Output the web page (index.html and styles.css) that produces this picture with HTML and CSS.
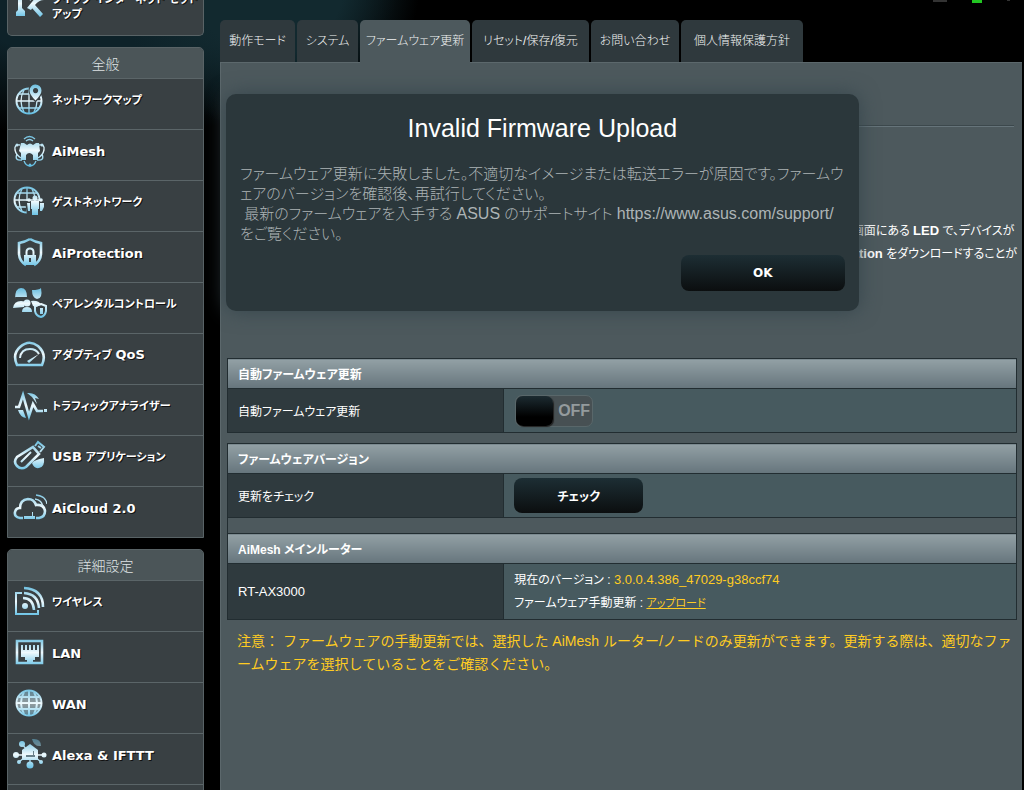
FILE: index.html
```html
<!DOCTYPE html>
<html lang="ja">
<head>
<meta charset="utf-8">
<title>ファームウェア更新</title>
<link rel="stylesheet" href="styles.css">
</head>
<body>
<svg class="defs" aria-hidden="true">
  <defs>
    <linearGradient id="ice" gradientUnits="userSpaceOnUse" x1="0" y1="3" x2="0" y2="32">
      <stop offset="0" stop-color="#6fc0e0"/><stop offset=".5" stop-color="#eef9fd"/><stop offset="1" stop-color="#62bfe4"/>
    </linearGradient>
  </defs>
</svg>
<div class="page">
  <nav class="sidebar">
    <div class="menu menu-top">
      <a class="item item-setup" href="#">
        <svg class="icon" viewBox="0 0 34 34"><path class="f" d="M2 8h9v4l-2 2v8l3 3v5H3v-4l2-2V14l-3-2zM14 22l9-11 3 2-8 11zM20 17q6-5 11-3-5 0-9 5l8 9-3 3-9-10z"/><path class="s" d="M15 11l3 3M21 8l1 3"/></svg>
        <span>クイック インターネット セット<br>アップ</span>
      </a>
    </div>
    <div class="menu">
      <h2 class="menu-title">全般</h2>
      <a class="item" href="#"><svg class="icon" viewBox="0 0 34 34"><circle class="s" cx="16" cy="19" r="12.5"/><path class="s t" d="M16 6.500v25M4 19h25M6 12h20M6 26h20M11 8q-6 11 0 22M21 8q6 11 0 22"/><path class="k" d="M21.500 1.500a7.500 7.500 0 0 1 8 7q0 5-7 12-7-7-7-12a7 7 0 0 1 6-7"/><path class="f" fill-rule="evenodd" d="M22 2.500a6 6 0 0 1 6.500 6q0 4-6 10-6-6-6-10a6 6 0 0 1 5.500-6m.500 3.500a2.600 2.600 0 1 0 .1 0"/></svg><span>ネットワークマップ</span></a>
      <a class="item" href="#"><svg class="icon" viewBox="0 0 34 34"><path class="f" d="M8 10h3l3 2q3-3 6 0l3-2h3l1 8-2 2v7h-5v-5q-4-4-7 0v5H8v-7l-2-2z"/><path class="s t" d="M11 6q5.500-5 11 0M13 8q3.500-3 7 0M7 12q-6-1-5 5 1 5 6 8M26 12q6-1 5 5-1 5-6 8M4 21q-3 7 5 6M29 21q3 7-5 6M11 28q2 5 6 5t6-5"/><circle class="f" cx="4" cy="12" r="1.500"/><circle class="f" cx="29" cy="12" r="1.500"/><circle class="f" cx="17" cy="32" r="1.500"/></svg><span class="latin-item">AiMesh</span></a>
      <a class="item" href="#"><svg class="icon" viewBox="0 0 34 34"><circle class="s" cx="14" cy="16" r="12.500"/><path class="s t" d="M14 4v25M2 16h25M4 9h20M4 23h20M9 5q-6 11 0 22M19 5q6 11 0 22"/><path class="k" d="M12 17h20v14H14z"/><circle class="f" cx="22" cy="14" r="2.500"/><path class="f" d="M18 17h8v8h-1v6h-6v-6h-1z"/><circle class="f" cx="16" cy="16" r="1.800"/><circle class="f" cx="28" cy="16" r="1.800"/><path class="f" d="M14 19h3v8h-2zM27 19h4v4l-2 4h-2z"/></svg><span>ゲストネットワーク</span></a>
      <a class="item" href="#"><svg class="icon" viewBox="0 0 34 34"><path class="s w" d="M17 4q5 3 11 4v10q0 8-7 12M17 4q-5 3-11 4v10q0 8 7 12"/><path class="s" d="M13.500 21v-4q0-3.500 3.500-3.500t3.500 3.500v4"/><path class="f" fill-rule="evenodd" d="M11 20h12v10H11zm5 3v4h2v-4z"/></svg><span class="latin-item">AiProtection</span></a>
      <a class="item" href="#"><svg class="icon" viewBox="0 0 34 34"><path class="f" d="M2 13q0-11 6-11t6 9H2zM19 4q7 0 9-2 2 11-4 11-5-1-5-9zM0 22q1-7 8-7 4 0 5 2-2 2-2 4zM18 15q8-1 10 4l-5 2-3-1z"/><circle class="f" cx="14" cy="17" r="3.500"/><path class="f" d="M9 26q0-5 5-5t5 5z"/><path class="s" d="M28 18l5 2v5q-1 5-5 6-5-1-6-6v-5z"/><path class="f" d="M27 22h3v6h-3z"/></svg><span>ペアレンタルコントロール</span></a>
      <a class="item" href="#"><svg class="icon" viewBox="0 0 34 34"><path class="s w" d="M4 28Q-1 17 7 10q9-8 18-1 9 8 4 19z"/><path class="s" d="M7 21q1-9 10-9 6 0 9 5"/><path class="f" d="M14 24l12-7-10 9z"/></svg><span>アダプティブ <span class="latin-item">QoS</span></span></a>
      <a class="item" href="#"><svg class="icon" viewBox="0 0 34 34"><path class="s w" d="M2 19h4l4-12 6 21 4-12 4 7h6"/><path class="f" d="M14 5q8-1 12 6l-4-1 2 6-5-7zM5 22h5l3 8q-6-1-8-8zM31 21h3v3h-3z"/></svg><span>トラフィックアナライザー</span></a>
      <a class="item" href="#"><svg class="icon" viewBox="0 0 34 34"><path class="s w" d="M20 8l6 7-13 13q-5 3-9-1t0-9z"/><path class="s" d="M22 7l3-4 6 5-4 5M18 13L8 23M25 7l3 2"/><path class="f" d="M19 24q2-3 12-5 1 9-5 10-5 1-7-5z"/></svg><span><span class="latin-item">USB</span> アプリケーション</span></a>
      <a class="item" href="#"><svg class="icon" viewBox="0 0 34 34"><path class="s w" d="M10 28H7q-6-1-5-6 1-4 5-4 0-8 8-9 6 0 8 6 8-1 9 6 0 6-6 7h-3"/><path class="s t" d="M22 9q7 1 8 8M23 5q10 1 11 9"/><path class="f" d="M11 26h11v3H11zM19 22h1v4h-1z"/></svg><span class="latin-item">AiCloud 2.0</span></a>
    </div>
    <div class="menu">
      <h2 class="menu-title">詳細設定</h2>
      <a class="item" href="#"><svg class="icon" viewBox="0 0 34 34"><path class="s" d="M9 9H3v21h22v-4"/><path class="s w" d="M10 14q10 0 11 12M11 9q14 1 15 15M11 4q19 1 19 19"/><circle class="f" cx="12" cy="22" r="3"/></svg><span>ワイヤレス</span></a>
      <a class="item" href="#"><svg class="icon" viewBox="0 0 34 34"><path class="s w" d="M4 6h25v22H4z"/><path class="f" d="M8 10h2v5h2v-5h2v5h2v-5h2v5h2v-5h2v5h2v-5h2v12h-4v3h-2v2h-6v-2h-2v-3H8z"/></svg><span class="latin-item">LAN</span></a>
      <a class="item" href="#"><svg class="icon" viewBox="0 0 34 34"><circle class="f d" cx="16" cy="17" r="12"/><circle class="s" cx="16" cy="17" r="12.500"/><path class="s" d="M16 5v25M4 17h25M6 11h20M6 23h20M11 6q-6 11 0 22M21 6q6 11 0 22"/></svg><span class="latin-item">WAN</span></a>
      <a class="item" href="#"><svg class="icon" viewBox="0 0 34 34"><path class="s t" d="M9 7l5 6M2 18h30M6 25l6-5M17 20v8M28 25l-6-5"/><path class="f" d="M9 13l8-6 8 6v10H9z"/><path class="f d" d="M19 2q9-1 9 7-7 1-9-7z"/><circle class="f" cx="9" cy="7" r="3"/><circle class="f" cx="3" cy="18" r="3"/><circle class="f" cx="31" cy="18" r="2.500"/><circle class="f" cx="17" cy="28" r="3.500"/><circle class="f" cx="6" cy="25" r="2"/><circle class="f" cx="28" cy="25" r="2"/><path class="g" d="M13 18h9v2h-9zM20 14h1v4h-1z"/></svg><span class="latin-item">Alexa &amp; IFTTT</span></a>
      <a class="item" href="#" aria-label="メニュー"></a>
    </div>
  </nav>

  <main class="main">
    <div class="status"><i class="led"></i><i class="led led-on"></i><i class="led led-dot"></i></div>
    <nav class="tabs">
      <a class="tab" href="#">動作モード</a>
      <a class="tab" href="#">システム</a>
      <a class="tab tab-active" href="#">ファームウェア更新</a>
      <a class="tab" href="#">リセット/保存/復元</a>
      <a class="tab" href="#">お問い合わせ</a>
      <a class="tab" href="#">個人情報保護方針</a>
    </nav>
    <section class="panel">
      <div class="intro">
        <hr class="rule">
        <p class="intro-text">画面にある <b>LED</b> で、デバイスが<br><b>ation</b> をダウンロードすることが</p>
      </div>

      <table class="grid">
        <thead><tr><th colspan="2">自動ファームウェア更新</th></tr></thead>
        <tbody><tr>
          <th scope="row"><label for="auto">自動ファームウェア更新</label></th>
          <td><label class="toggle"><input type="checkbox" id="auto"><span>OFF</span></label></td>
        </tr></tbody>
      </table>

      <table class="grid">
        <thead><tr><th colspan="2">ファームウェアバージョン</th></tr></thead>
        <tbody>
          <tr><th scope="row">更新をチェック</th><td><button class="btn btn-check" type="button">チェック</button></td></tr>
          <tr class="spacer"><td colspan="2"></td></tr>
          <tr class="head"><th colspan="2">AiMesh メインルーター</th></tr>
          <tr class="version">
            <th scope="row">RT-AX3000</th>
            <td>現在のバージョン : <span class="value">3.0.0.4.386_47029-g38ccf74</span><br>ファームウェア手動更新 : <a class="link" href="#">アップロード</a></td>
          </tr>
        </tbody>
      </table>
      <p class="note">注意： ファームウェアの手動更新では、選択した AiMesh ルーター/ノードのみ更新ができます。更新する際は、適切なファ<br>ームウェアを選択していることをご確認ください。</p>

      <div class="modal" role="dialog" aria-labelledby="modal-title">
        <h1 class="modal-title" id="modal-title">Invalid Firmware Upload</h1>
        <p class="modal-text">ファームウェア更新に失敗しました。不適切なイメージまたは転送エラーが原因です。ファームウ<br>ェアのバージョンを確認後、再試行してください。<br>&nbsp;最新のファームウェアを入手する <span class="latin">ASUS</span> のサポートサイト <span class="latin">https://www.asus.com/support/</span><br>をご覧ください。</p>
        <div class="modal-actions"><button class="btn btn-ok" type="button">OK</button></div>
      </div>
    </section>
  </main>
</div>
</body>
</html>
```
FILE: styles.css
```css
* { box-sizing: border-box; }

body {
  margin: 0;
  background: #000;
  color: #fff;
  font-family: "Liberation Sans", "Noto Sans CJK JP", sans-serif;
  font-size: 13px;
}

.defs { position: absolute; width: 0; height: 0; }

.page {
  display: flex;
  gap: 16px;
  height: 100vh;
  padding: 0 2px 0 7px;
  overflow: hidden;
  background:
    radial-gradient(ellipse 150px 150px at 270px -20px, #12292f 50%, transparent),
    radial-gradient(ellipse 300px 160px at 100px -20px, #0e2229 50%, transparent),
    #000;
}

/* Sidebar */
.sidebar {
  display: flex;
  flex: none;
  flex-direction: column;
  gap: 11px;
  width: 197px;
}

.menu {
  flex: none;
  border: 1px solid #596366;
  border-radius: 5px 5px 0 0;
  background: #394043;
  overflow: hidden;
}

.menu-top {
  display: flex;
  align-items: flex-end;
  height: 36px;
  border-top: 0;
  border-radius: 0 0 5px 5px;
}

.menu-title {
  margin: 0;
  height: 30px;
  background: #4b5558;
  color: #dfe3e4;
  font-size: 14px;
  font-weight: 300;
  line-height: 32px;
  text-align: center;
}

.item {
  display: flex;
  align-items: center;
  gap: 5px;
  height: 51px;
  padding: 0 5px 8px;
  border-top: 1px solid #5b6568;
  color: #fff;
  font-family: "DejaVu Sans", "Noto Sans CJK JP", sans-serif;
  font-size: 11px;
  font-weight: 700;
  line-height: 15px;
  text-decoration: none;
  text-shadow: 1px 1px 0 #111;
  white-space: nowrap;
  font-feature-settings: "palt";
}

.latin-item { font-size: 13px; }

.item-setup { border-top: 0; padding-bottom: 5px; }

.icon { flex: none; width: 34px; height: 34px; margin-top: -2px; }
.item-setup .icon { margin: 0 0 8px; }
.f { fill: url(#ice); }
.d { opacity: .5; }
.g { fill: #68808a; }
.k { fill: #394043; }
.s { fill: none; stroke: url(#ice); stroke-width: 2; }
.s.t { stroke-width: 1.3; }
.s.w { stroke-width: 2.6; }

/* Main column */
.main {
  display: flex;
  flex: 1;
  flex-direction: column;
  min-width: 0;
}

.status {
  display: flex;
  flex: none;
  justify-content: flex-end;
  gap: 25px;
  height: 20px;
  padding-right: 12px;
}

.led { width: 14px; height: 2px; background: #333; }
.led-on { width: 10px; height: 3px; background: #22c522; }
.led-dot { width: 3px; height: 1px; }

.tabs {
  display: grid;
  flex: none;
  grid-template-columns: 75px 61px 110px 117px 88px 122px;
  column-gap: 2px;
  height: 42px;
}

.tab {
  border-radius: 5px 5px 0 0;
  background: #2f393d;
  color: #f2f4f4;
  font-size: 12px;
  font-weight: 300;
  line-height: 42px;
  text-align: center;
  text-decoration: none;
  white-space: nowrap;
  font-feature-settings: "palt";
}

.tab-active { margin-bottom: -1px; background: #4d595d; z-index: 1; }

.panel {
  position: relative;
  flex: 1;
  padding: 0 5px 0 6px;
  border: solid #5c686c;
  border-width: 1px 0 0 1px;
  background: #4d595d;
}

.intro { height: 295px; padding-top: 62px; }

.rule {
  margin: 0 3px 0 0;
  border: 0;
  border-top: 1px solid #3c484c;
  border-bottom: 1px solid #66747a;
}

.intro-text {
  width: fit-content;
  margin: 93px 0 0 auto;
  font-size: 12px;
  font-weight: 400;
  line-height: 23px;
  font-feature-settings: "palt";
  white-space: nowrap;
}

.intro-text b { font-size: 13px; line-height: 1; }

/* Settings tables */
.grid {
  width: 100%;
  margin-bottom: 10px;
  border-collapse: collapse;
  font-feature-settings: "palt";
}

.grid th, .grid td {
  padding: 0 10px;
  border: 1px solid #222d31;
  font-size: 12px;
  font-weight: 400;
  text-align: left;
}

.grid thead th, .grid .head th {
  height: 30px;
  background: linear-gradient(#92a0a5, #66757c);
  font-weight: 700;
}

.grid tbody th { width: 35%; height: 44px; background: #2f3a3e; }
.grid tbody td { background: #475a5f; }
.grid .spacer td { height: 16px; background: #4d595d; }
.grid .version th { height: 56px; font-size: 13px; }
.grid .version td { line-height: 23px; }

.value { color: #ffcc22; font-size: 13px; line-height: 1; }
.link { color: #ffcc22; font-size: 11px; line-height: 1; }

.toggle {
  display: flex;
  align-items: center;
  width: 78px;
  height: 32px;
  margin-left: 1px;
  border: 1px solid #59676a;
  border-radius: 7px;
  background: #475053;
  color: #949b9d;
  font-size: 16px;
  font-weight: 700;
}

.toggle input {
  flex: none;
  width: 37px;
  height: 30px;
  margin: 0 5px 0 0;
  border-radius: 7px;
  background: linear-gradient(#1c2b31, #000 70%);
  box-shadow: 1px 1px 1px #222;
  appearance: none;
}

.btn {
  display: block;
  border: 0;
  border-radius: 8px;
  background: linear-gradient(#1d2e34, #0b0e0f);
  color: #fff;
  font-family: "DejaVu Sans", "Noto Sans CJK JP", sans-serif;
  font-size: 12px;
  font-weight: 700;
  font-feature-settings: "palt";
}

.btn-check { width: 129px; height: 35px; }
.btn-ok { width: 164px; height: 36px; }

.note {
  margin: 0;
  padding-left: 10px;
  color: #ffcc22;
  font-size: 14px;
  line-height: 23px;
  white-space: nowrap;
}

/* Dialog */
.modal {
  position: absolute;
  top: 31px;
  left: 5px;
  width: 79%;
  padding: 20px 14px;
  border-radius: 10px;
  background: #2b373b;
  box-shadow: 0 0 20px #36464d;
}

.modal-title {
  margin: 0 0 22px;
  font-size: 25px;
  font-weight: 400;
  line-height: 28px;
  text-align: center;
}

.modal-text {
  margin: 0;
  color: #adb4b6;
  font-size: 15px;
  font-weight: 300;
  line-height: 20px;
  white-space: nowrap;
  font-feature-settings: "palt";
}

.latin { font-size: 16px; line-height: 1; }
.modal-actions { display: flex; justify-content: flex-end; margin-top: 11px; }
```
